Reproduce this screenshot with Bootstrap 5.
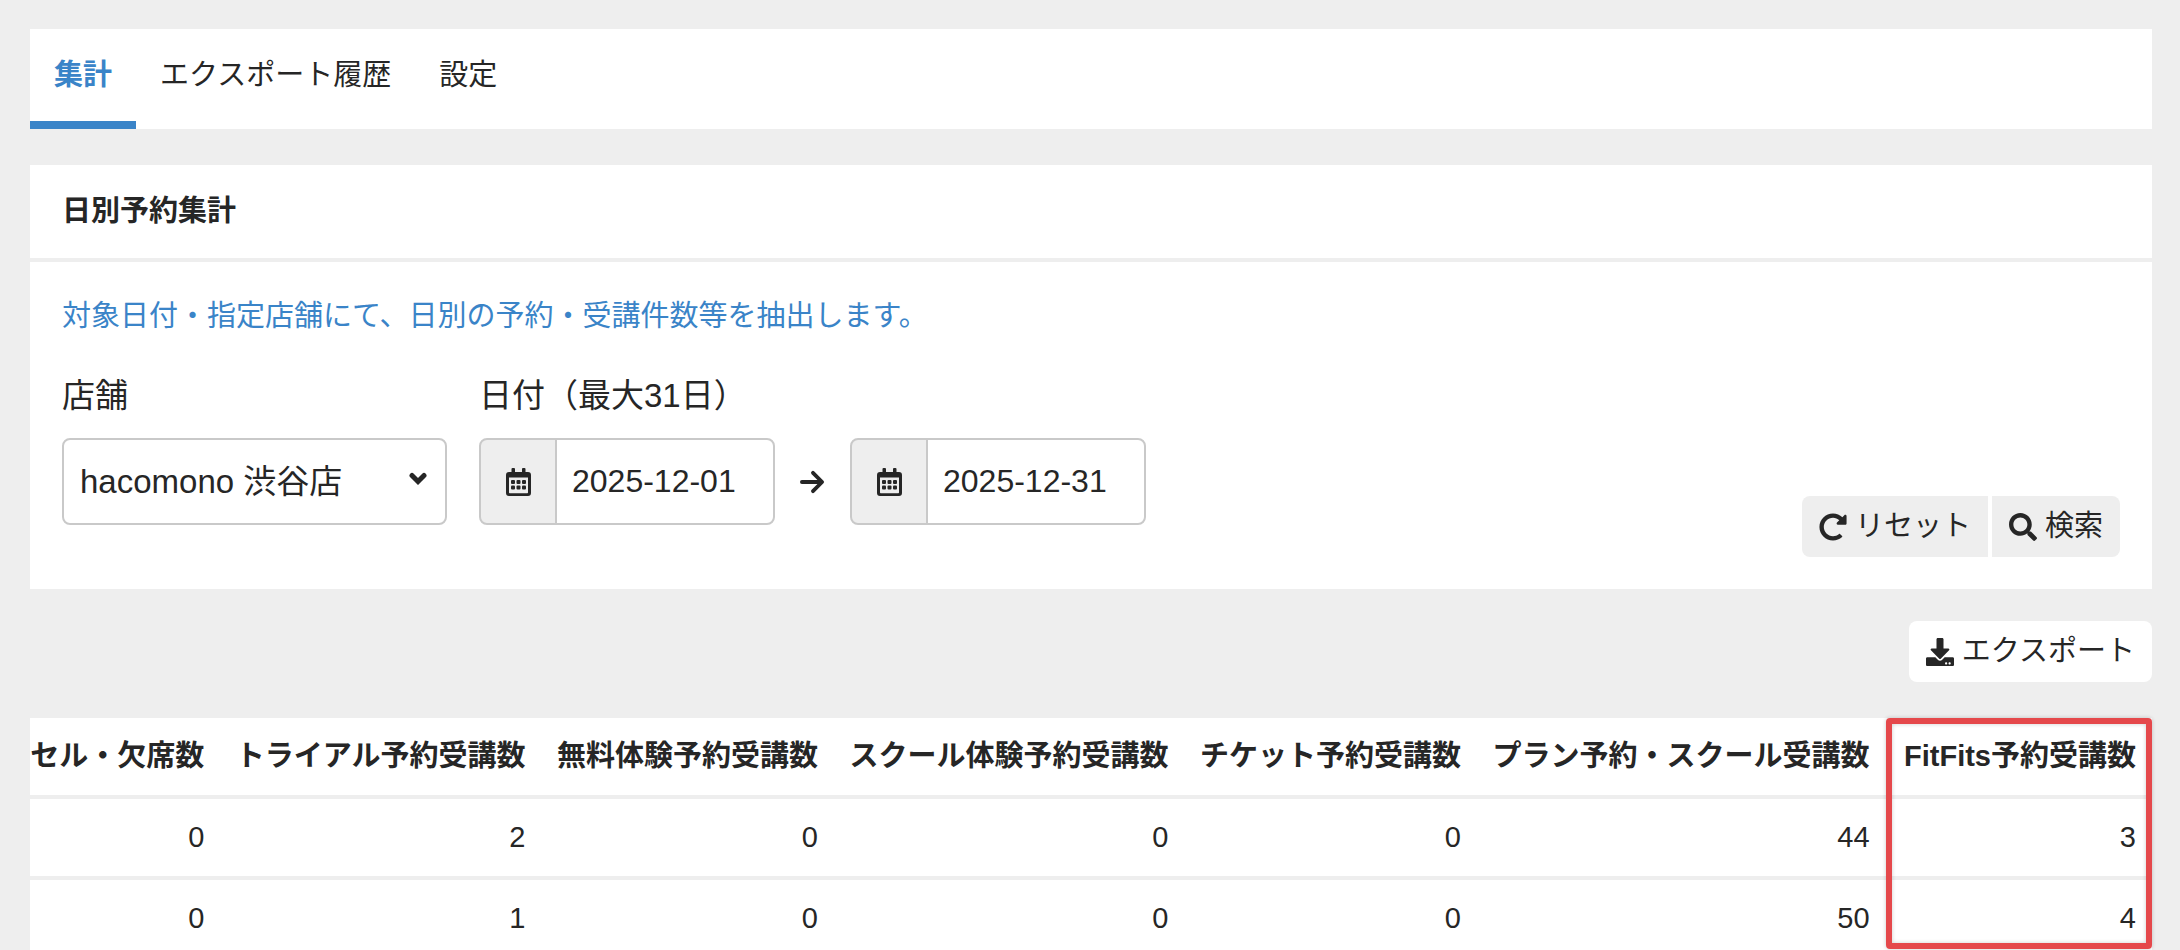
<!DOCTYPE html>
<html lang="ja">
<head>
<meta charset="utf-8">
<meta name="viewport" content="width=device-width, initial-scale=1">
<title>日別予約集計</title>
<link href="https://cdn.jsdelivr.net/npm/bootstrap@5.3.0/dist/css/bootstrap.min.css" rel="stylesheet">
<style>
  :root { --ink: #262626; --accent: #3a84c8; --ground: #eeeeee; --line: #c9c9c9; }
  body { background: var(--ground); color: var(--ink); font-family: "Liberation Sans", "Noto Sans CJK JP", sans-serif; font-size: 29px; line-height: 45px; }
  .page { padding: 29px 28px 0 30px; }
  .tabs { margin-bottom: 36px; }
  .tabs .nav-link { color: var(--ink); padding: 24px 24px 23px; border-bottom: 8px solid transparent; }
  .tabs .nav-link.active { color: var(--accent); border-bottom-color: var(--accent); font-weight: 700; }
  .panel-head { padding: 24px 32px; border-bottom: 4px solid var(--ground); }
  .panel-body { padding: 32px; }
  .lede { color: var(--accent); margin-bottom: 33px; }
  .field-label { font-size: 33px; line-height: 48px; margin-bottom: 18px; }
  .fields { gap: 32px; }
  .field { margin-bottom: 32px; }
  .control { height: 87px; border: 2px solid var(--line); border-radius: 8px; font-size: 32px; line-height: 48px; color: var(--ink); }
  .shop-box { width: 385px; }
  select.control { font-size: 33px; padding: 0 64px 0 16px; background-image: none; }
  .chevron { position: absolute; right: 20px; top: 32px; pointer-events: none; }
  .date-group { width: 296px; }
  .date-group .input-group-text { width: 78px; background: var(--ground); }
  .date-group input.control { padding: 0 15px; margin-left: -2px !important; }
  .dates { gap: 25px; }
  .tool-pair { gap: 5px; }
  .tool { background: var(--ground); color: var(--ink); font-size: 29px; line-height: 45px; padding: 8px 17px; border: 0; border-radius: 8px; gap: 8px; }
  .tool.export { background: #fff; }
  .export-bar { padding: 32px 0 36px; }
  .result { white-space: nowrap; text-align: right; border-collapse: separate; border-spacing: 0; }
  .result th, .result td { height: 81px; padding: 0 16px 0 15px; border-bottom: 4px solid var(--ground); line-height: 45px; }
  .result th:first-child { padding-left: 0; }
  .result th:last-child { padding-left: 18px; }
  .marked { position: absolute; inset: 0 0 auto 0; height: 231px; border: 6px solid #e5484b; border-radius: 4px; box-shadow: 0 0 4px rgba(0,0,0,.2), inset 0 0 4px rgba(0,0,0,.2); pointer-events: none; }
</style>
</head>
<body>
<svg class="d-none" aria-hidden="true">
  <symbol id="calendar" viewBox="0 0 25 28"><path fill-rule="evenodd" d="M5.500 4V1Q5.500 0 6.500 0H8Q9 0 9 1V4h7V1Q16 0 17 0h1.500Q19.500 0 19.500 1V4H22q3 0 3 3v18q0 3-3 3H3q-3 0-3-3V7Q0 4 3 4zM3 9.500V24.500q0 .7.700.7H21.300q.7 0 .7-.7V9.500z"/><g><rect x="5" y="12" width="4" height="4" rx="1"/><rect x="10.500" y="12" width="4" height="4" rx="1"/><rect x="16" y="12" width="4" height="4" rx="1"/><rect x="5" y="17.500" width="4" height="4" rx="1"/><rect x="10.500" y="17.500" width="4" height="4" rx="1"/><rect x="16" y="17.500" width="4" height="4" rx="1"/></g></symbol>
</svg>
<div class="page vh-100 overflow-hidden">
  <nav class="tabs nav bg-white">
    <a class="nav-link active" href="#" aria-current="page">集計</a>
    <a class="nav-link" href="#">エクスポート履歴</a>
    <a class="nav-link" href="#">設定</a>
  </nav>

  <section class="bg-white">
    <div class="panel-head fw-bold">日別予約集計</div>
    <form class="panel-body">
      <p class="lede">対象日付・指定店舗にて、日別の予約・受講件数等を抽出します。</p>
      <div class="d-flex flex-wrap fields">
        <div class="shop-box field">
          <label class="field-label d-block" for="shop">店舗</label>
          <div class="position-relative">
            <select class="form-select control" id="shop"><option>hacomono 渋谷店</option></select>
            <svg class="chevron" width="18" height="18" viewBox="0 0 18 18" fill="none" stroke="#262626" stroke-width="5" stroke-linecap="round" stroke-linejoin="miter"><path d="M3 5.500 9 11.500l6-6"/></svg>
          </div>
        </div>
        <div class="field">
          <label class="field-label d-block" for="from">日付（最大31日）</label>
          <div class="d-flex align-items-center dates">
            <div class="input-group date-group flex-nowrap">
              <span class="input-group-text control justify-content-center"><svg width="25" height="28" fill="#262626"><use href="#calendar"/></svg></span>
              <input class="form-control control" id="from" type="text" value="2025-12-01">
            </div>
            <svg width="25" height="26" viewBox="0 0 26 26" fill="none" stroke="#262626" stroke-width="4" stroke-linecap="round" stroke-linejoin="round"><path d="M2 13H22M13.500 3.500 23 13l-9.500 9.500"/></svg>
            <div class="input-group date-group flex-nowrap">
              <span class="input-group-text control justify-content-center"><svg width="25" height="28" fill="#262626"><use href="#calendar"/></svg></span>
              <input class="form-control control" id="to" type="text" aria-label="終了日" value="2025-12-31">
            </div>
          </div>
        </div>
        <div class="btn-group tool-pair ms-auto align-self-end">
          <button type="reset" class="btn tool d-flex align-items-center"><svg width="28" height="28" viewBox="0 0 512 512" fill="#262626"><path d="M256.455 8c66.269.119 126.437 26.233 170.859 68.685l35.715-35.715C478.149 25.851 504 36.559 504 57.941V192c0 13.255-10.745 24-24 24H345.941c-21.382 0-32.090-25.851-16.971-40.971l41.750-41.750c-30.864-28.899-70.801-44.907-113.230-45.273-92.398-.798-170.283 73.977-169.484 169.442C88.764 348.009 162.184 424 256 424c41.127 0 79.997-14.678 110.629-41.556 4.743-4.161 11.906-3.908 16.368.553l39.662 39.662c4.872 4.872 4.631 12.815-.482 17.433C378.202 479.813 319.926 504 256 504 119.034 504 8.001 392.967 8 256.002 7.999 119.193 119.646 7.755 256.455 8z"/></svg>リセット</button>
          <button type="submit" class="btn tool d-flex align-items-center"><svg width="28" height="28" viewBox="0 0 512 512" fill="#262626"><path d="M505 442.700 405.300 343c-4.500-4.500-10.600-7-17-7H372c27.600-35.300 44-79.700 44-128C416 93.100 322.900 0 208 0S0 93.100 0 208s93.100 208 208 208c48.300 0 92.700-16.400 128-44v16.300c0 6.400 2.500 12.500 7 17l99.700 99.700c9.400 9.400 24.600 9.400 33.900 0l28.300-28.300c9.400-9.400 9.400-24.600.1-34zM208 336c-70.700 0-128-57.200-128-128 0-70.700 57.200-128 128-128 70.700 0 128 57.200 128 128 0 70.700-57.200 128-128 128z"/></svg>検索</button>
        </div>
      </div>
    </form>
  </section>

  <div class="d-flex justify-content-end export-bar">
    <button type="button" class="btn tool export d-flex align-items-center"><svg width="28" height="28" viewBox="0 0 512 512" fill="#262626"><path d="M216 0h80c13.300 0 24 10.700 24 24v168h87.700c17.800 0 26.700 21.500 14.100 34.100L269.700 378.300c-7.500 7.500-19.800 7.500-27.300 0L90.100 226.100c-12.600-12.600-3.700-34.100 14.100-34.100H192V24c0-13.300 10.700-24 24-24zm296 376v112c0 13.300-10.700 24-24 24H24c-13.300 0-24-10.700-24-24V376c0-13.300 10.700-24 24-24h146.700l49 49c20.100 20.100 52.500 20.100 72.600 0l49-49H488c13.300 0 24 10.700 24 24zm-124 88c0-11-9-20-20-20s-20 9-20 20 9 20 20 20 20-9 20-20zm64 0c0-11-9-20-20-20s-20 9-20 20 9 20 20 20 20-9 20-20z"/></svg>エクスポート</button>
  </div>

  <div class="d-flex justify-content-end">
    <table class="result bg-white w-100">
      <thead>
        <tr><th>セル・欠席数</th><th>トライアル予約受講数</th><th>無料体験予約受講数</th><th>スクール体験予約受講数</th><th>チケット予約受講数</th><th>プラン予約・スクール受講数</th><th class="position-relative">FitFits予約受講数<div class="marked"></div></th></tr>
      </thead>
      <tbody>
        <tr><td>0</td><td>2</td><td>0</td><td>0</td><td>0</td><td>44</td><td>3</td></tr>
        <tr><td>0</td><td>1</td><td>0</td><td>0</td><td>0</td><td>50</td><td>4</td></tr>
      </tbody>
    </table>
  </div>
</div>
<script src="https://cdn.jsdelivr.net/npm/bootstrap@5.3.0/dist/js/bootstrap.bundle.min.js"></script>
</body>
</html>
